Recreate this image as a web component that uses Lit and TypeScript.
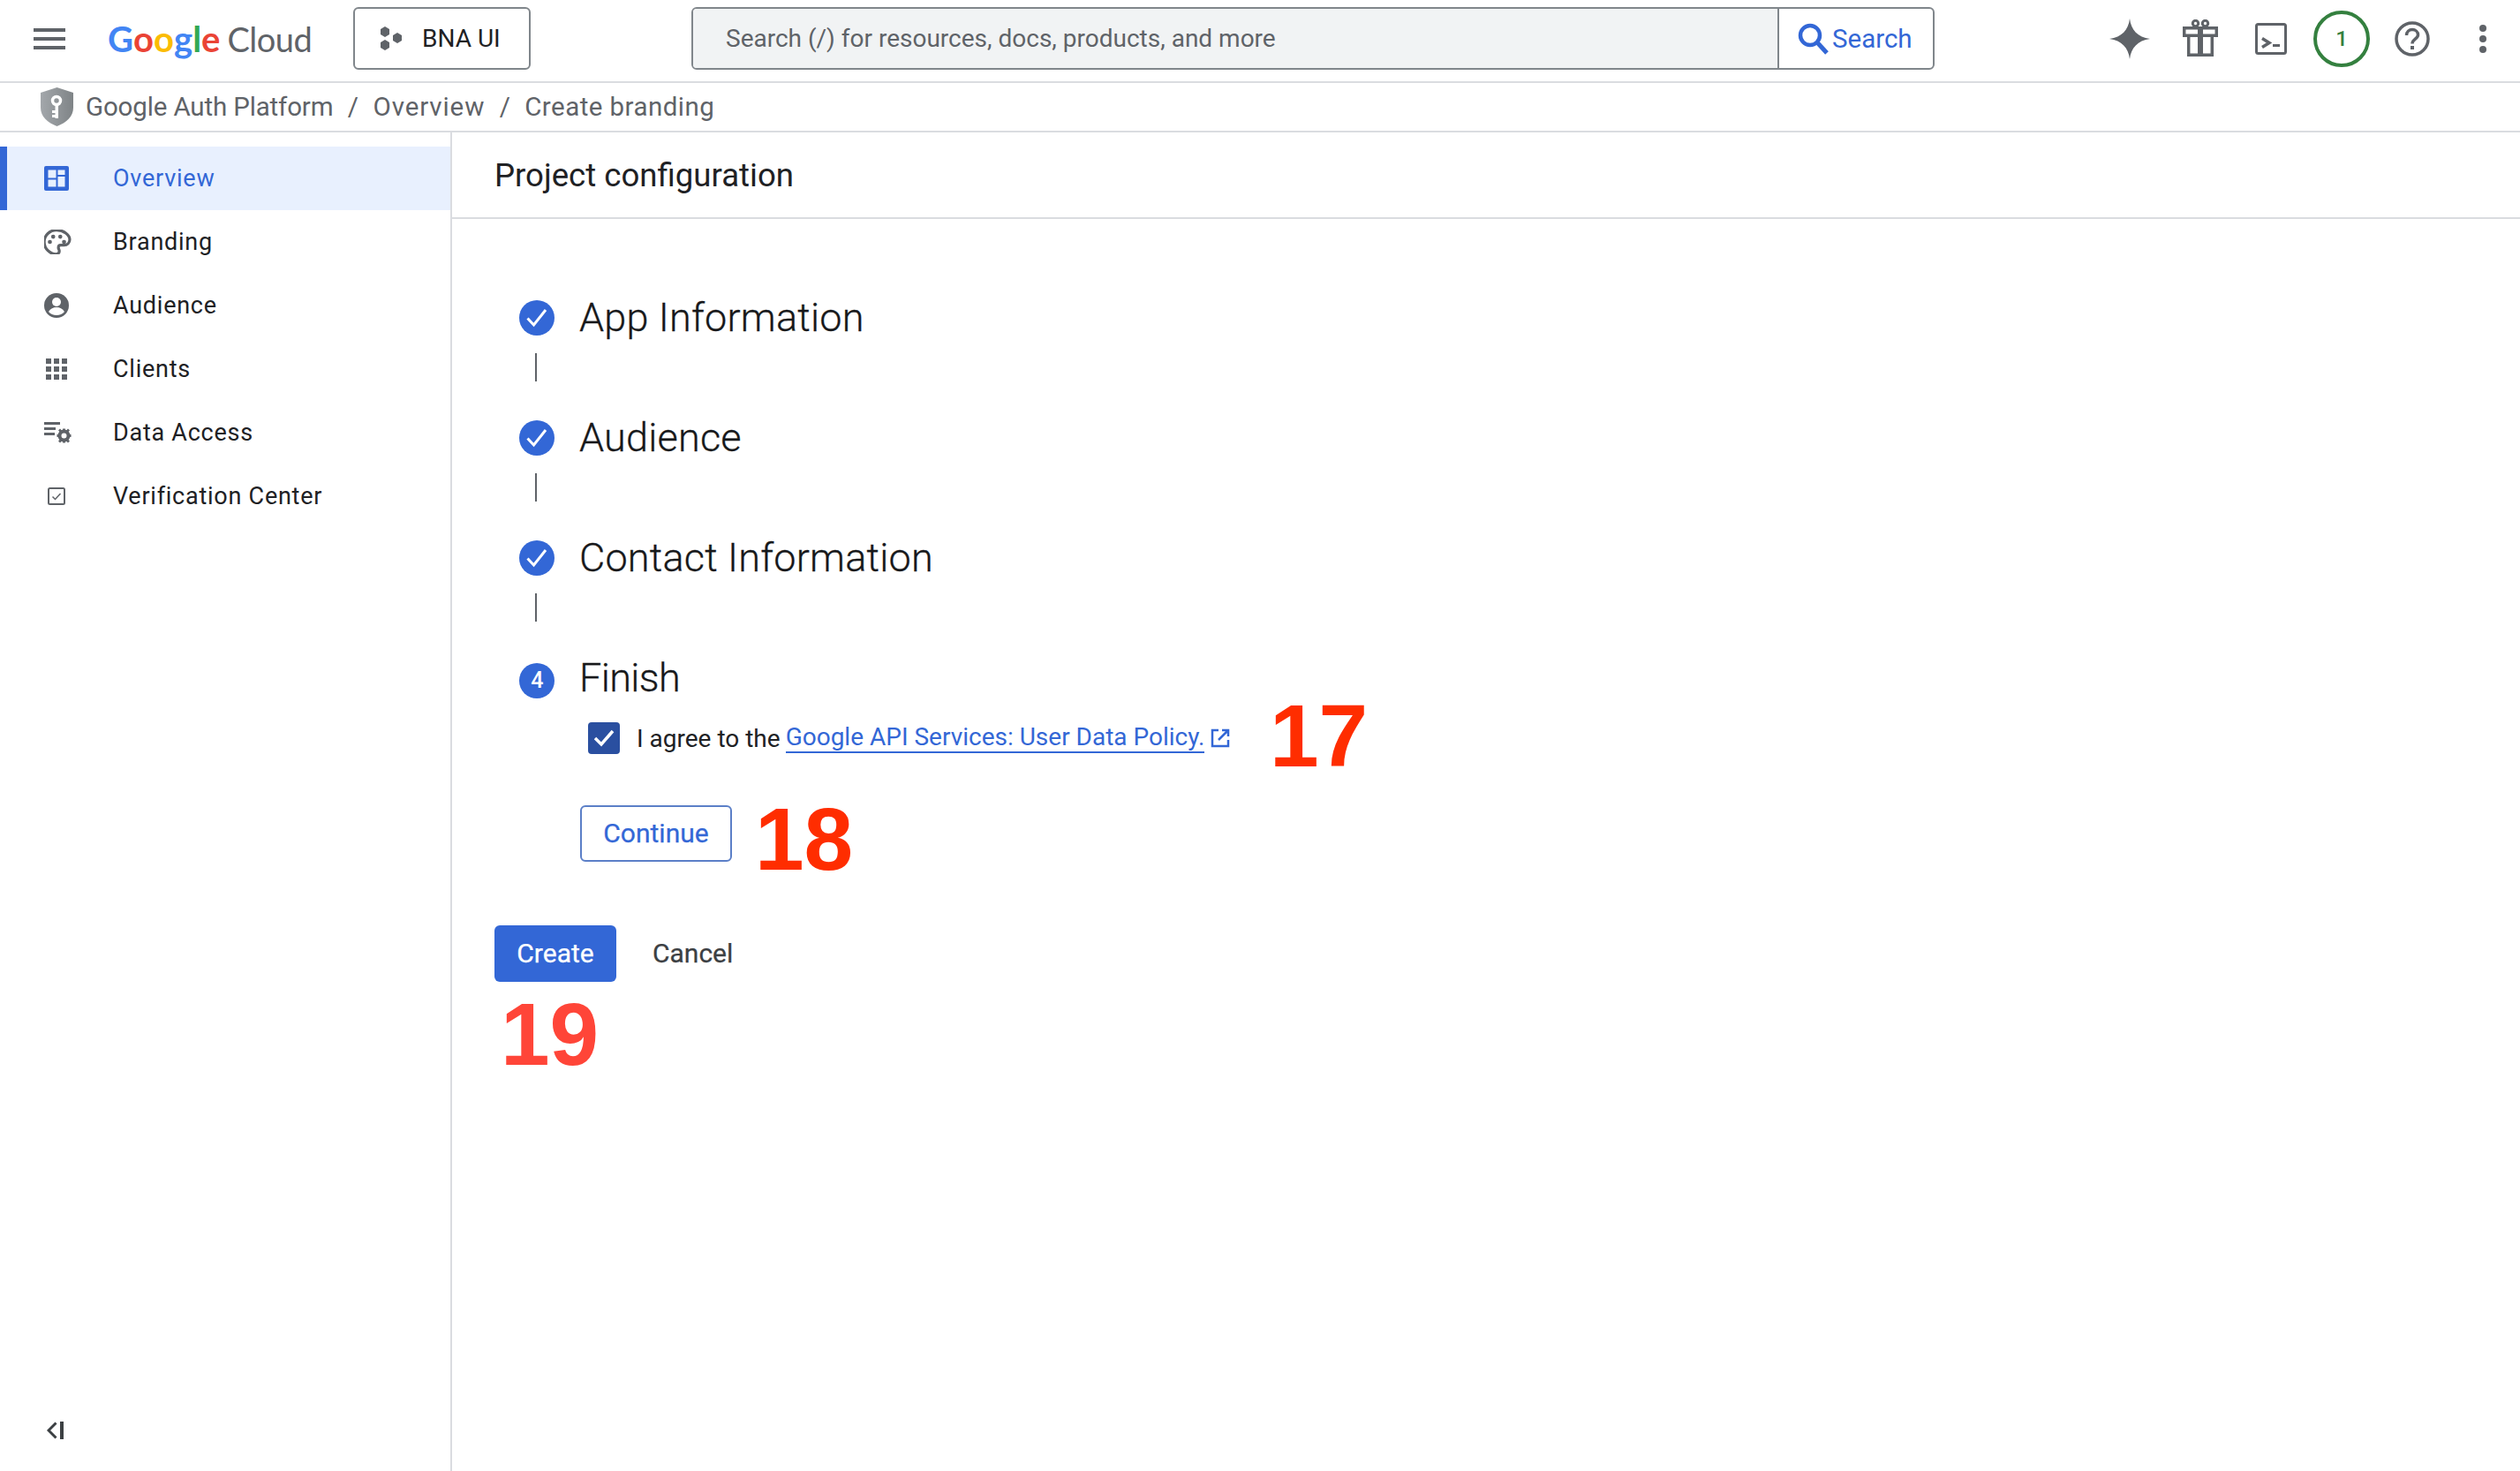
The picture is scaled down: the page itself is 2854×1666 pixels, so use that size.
import { LitElement, html, css, svg } from "lit";
import { customElement } from "lit/decorators.js";

const check = svg`<circle cx="20" cy="20" r="20" fill="#3367d6"/><path d="M7.500 20.500l7 7.500 13.500-17" transform="translate(2 0)" fill="none" stroke="#fff" stroke-width="3"/>`;

const navIcons: Record<string, unknown> = {
  overview: svg`<rect x="0" y="0" width="28" height="28" rx="2" fill="#3367d6"/><path d="M4.500 4.500H13.500v9H4.500zM4.500 15.500H13.500V23.500H4.500zM15.500 4.500h8V10h-8zM15.500 12h8V23.500h-8z" fill="#e8f0fe"/>`,
  branding: svg`<g transform="translate(-1 -1) scale(1.07)"><path d="M14 1.500C7 1.500 1 7 1 14s6 13 12.500 13c2.200 0 3.500-1.500 3.500-3.200 0-1.800-1-2.300-1-3.800 0-1.400 1-2.500 2.500-2.500h3.500c3.400 0 6-2.500 6-6C28 6.500 21.500 1.500 14 1.500z" fill="none" stroke="#5f6368" stroke-width="3"/><circle cx="7" cy="14" r="2.200" fill="#5f6368"/><circle cx="10.500" cy="8.500" r="2.200" fill="#5f6368"/><circle cx="18" cy="8.500" r="2.200" fill="#5f6368"/><circle cx="22" cy="14" r="2.200" fill="#5f6368"/></g>`,
  audience: svg`<circle cx="14" cy="14" r="14" fill="#5f6368"/><circle cx="14" cy="10" r="5" fill="#fff"/><path d="M5 21c2-3.500 5.500-5 9-5s7 1.500 9 5c-2 2.500-5.500 4-9 4s-7-1.500-9-4z" fill="#fff"/>`,
  clients: svg`<path d="M2 2h6v6H2zM11 2h6v6h-6zM20 2h6v6h-6zM2 11h6v6H2zM11 11h6v6h-6zM20 11h6v6h-6zM2 20h6v6H2zM11 20h6v6h-6zM20 20h6v6h-6z" fill="#5f6368"/>`,
  data: svg`<g transform="translate(0 2)"><path d="M0 0h18v3H0zM0 6h13v3H0zM0 12h12v3H0z" fill="#5f6368"/><circle cx="22.500" cy="15.500" r="5" fill="none" stroke="#5f6368" stroke-width="4"/><path d="M21 7.500h3v3h-3zM21 20.500h3v3h-3zM14.500 14h3v3h-3zM27.500 14h3v3h-3zM16 9.500l2-2 2.500 2.500-2 2zM29 21.500l-2 2-2.500-2.500 2-2zM16 21.500l2 2 2.500-2.500-2-2zM29 9.500l-2-2-2.500 2.500 2 2z" fill="#5f6368"/></g>`,
  verify: svg`<rect x="5" y="5" width="18" height="18" rx="1.500" fill="none" stroke="#5f6368" stroke-width="2"/><path d="M9.500 14.500l3 3 6-6.500" fill="none" stroke="#5f6368" stroke-width="1.500"/>`,
};

@customElement("app-root")
export class AppRoot extends LitElement {
  static styles = css`
    :host { display: block; width: 2854px; height: 1666px; position: relative; background: #fff; overflow: hidden; font-family: Roboto, "Liberation Sans", sans-serif; color: #202124; }
    svg { display: block; flex: none; }
    .top { height: 92px; padding-bottom: 5px; box-sizing: border-box; display: flex; align-items: center; }
    .rule { height: 2px; background: #dadce0; }
    .menu { margin-left: 38px; }
    .logo { margin-left: 48px; width: 231px; display: flex; align-items: baseline; font-family: Lato, sans-serif; font-size: 40px; line-height: 50px; font-weight: 700; }
    .logo b { font-weight: 700; }
    .logo .cloud { color: #5f6368; margin-left: 8px; font-weight: 400; font-size: 38px; letter-spacing: -0.500px; }
    .project { margin-left: 47px; width: 201px; height: 71px; box-sizing: border-box; border: 2px solid #80868b; border-radius: 6px; display: flex; align-items: center; padding-left: 28px; gap: 20px; font-size: 28px; }
    .search { margin-left: 182px; width: 1408px; height: 71px; box-sizing: border-box; border: 2px solid #80868b; border-radius: 6px; display: flex; overflow: hidden; }
    .field { flex: 1; background: #f1f3f4; color: #5f6368; display: flex; align-items: center; padding-left: 37px; font-size: 28px; }
    .sbtn { width: 176px; border-left: 2px solid #80868b; display: flex; align-items: center; padding-left: 21px; gap: 3px; box-sizing: border-box; color: #3367d6; font-size: 29.500px; font-weight: 400; }
    .tools { margin-left: 198px; display: flex; align-items: center; }
    .badge { width: 64px; height: 64px; box-sizing: border-box; border: 4px solid #34803f; border-radius: 50%; color: #34803f; display: flex; align-items: center; justify-content: center; font-size: 24px; font-weight: 500; }
    .crumbs { height: 54px; border-bottom: 2px solid #dadce0; display: flex; align-items: center; padding-left: 46px; color: #5f6368; font-size: 29.500px; }
    .crumbs .s { width: 45px; text-align: center; }
    .crumbs .t { margin-left: 14px; letter-spacing: -0.150px; }
    .crumbs .u { letter-spacing: 0.900px; }
    .crumbs .v { letter-spacing: 0.450px; }
    .body { display: flex; height: 1518px; }
    .side { width: 512px; box-sizing: border-box; border-right: 2px solid #dadce0; padding-top: 16px; display: flex; flex-direction: column; }
    .item { height: 72px; display: flex; align-items: center; padding-left: 50px; font-size: 27px; letter-spacing: 0.750px; color: #202124; }
    .item .ic { width: 32px; display: flex; margin-right: 46px; }
    .item.on { background: #e8f0fe; color: #3367d6; box-shadow: inset 8px 0 0 #3367d6; }
    .collapse { margin-top: auto; margin-left: 53px; margin-bottom: 38px; }
    .main { flex: 1; min-width: 0; }
    .head { height: 96px; border-bottom: 2px solid #dadce0; display: flex; align-items: center; padding-left: 48px; font-size: 36.600px; }
    .content { padding: 92px 0 0 48px; }
    .step { display: flex; align-items: center; gap: 28px; height: 40px; padding-left: 28px; font-size: 45px; font-weight: 300; line-height: 40px; letter-spacing: 0.200px; color: #17181a; -webkit-text-stroke: 0.300px #17181a; }
    .line { width: 2px; height: 32px; background: #5f6368; margin: 20px 0 44px 46px; }
    .num { width: 40px; height: 40px; border-radius: 50%; background: #3367d6; color: #fff; -webkit-text-stroke: 0; display: flex; align-items: center; justify-content: center; font-size: 25px; font-weight: 500; transform: translateY(3px); }
    .finish { letter-spacing: -0.600px; }
    .agree { display: flex; align-items: center; margin: 30px 0 0 106px; height: 36px; font-size: 28px; }
    .box { width: 36px; height: 36px; border-radius: 4px; background: #2a4fa0; margin-right: 19px; }
    a { color: #3367d6; text-decoration: none; border-bottom: 2px solid #3367d6; margin-left: 6px; line-height: 32px; }
    .ext { margin-left: 7px; }
    .cont { margin: 58px 0 0 97px; width: 172px; height: 64px; padding-bottom: 2px; box-sizing: border-box; border: 2px solid #5b7fc7; border-radius: 6px; color: #3367d6; display: flex; align-items: center; justify-content: center; font-size: 30px; -webkit-text-stroke: 0.250px #3367d6; }
    .actions { display: flex; align-items: center; margin-top: 72px; }
    .create { width: 138px; height: 64px; padding-bottom: 2px; box-sizing: border-box; border-radius: 6px; background: #3367d6; color: #fff; display: flex; align-items: center; justify-content: center; font-size: 30px; -webkit-text-stroke: 0.250px #fff; }
    .cancel { margin-left: 41px; padding-bottom: 2px; font-size: 30px; color: #3c4043; -webkit-text-stroke: 0.250px #3c4043; }
    .note { position: absolute; font-family: "Liberation Sans", Arial, sans-serif; font-weight: 700; font-size: 100px; line-height: 100px; color: #ff2d00; }
    .n17 { left: 1438px; top: 783px; }
    .n18 { left: 855px; top: 900px; }
    .n19 { left: 567px; top: 1121px; color: #ff4538; }
  `;

  render() {
    const nav: [string, string][] = [["overview","Overview"],["branding","Branding"],["audience","Audience"],["clients","Clients"],["data","Data Access"],["verify","Verification Center"]];
    return html`
      <div class="top">
        <svg class="menu" width="36" height="24" viewBox="0 0 36 24"><path d="M0 0h36v4H0zM0 10h36v4H0zM0 20h36v4H0z" fill="#5f6368"/></svg>
        <div class="logo"><b style="color:#4285f4">G</b><b style="color:#ea4335">o</b><b style="color:#fbbc04">o</b><b style="color:#4285f4">g</b><b style="color:#34a853">l</b><b style="color:#ea4335">e</b><span class="cloud">Cloud</span></div>
        <div class="project">
          <svg width="28" height="28" viewBox="0 0 28 28"><path d="M6 0l5 3v6l-5 3-5-3V3zM20 7l5 3v6l-5 3-5-3v-6zM6 15l5 3v6l-5 3-5-3v-6z" fill="#5f6368"/></svg>
          <span>BNA UI</span>
        </div>
        <div class="search">
          <div class="field">Search (/) for resources, docs, products, and more</div>
          <div class="sbtn">
            <svg width="36" height="36" viewBox="0 0 36 36"><circle cx="14" cy="14" r="11" fill="none" stroke="#3367d6" stroke-width="4.500"/><path d="M22 22l11 12" stroke="#3367d6" stroke-width="5"/></svg>
            <span>Search</span>
          </div>
        </div>
        <div class="tools">
          <svg width="46" height="46" viewBox="0 0 46 46"><path d="M23 0c1.500 13 9 21 23 23-14 2-21.500 10-23 23-1.500-13-9-21-23-23 14-2 21.500-10 23-23z" fill="#5f6368"/></svg>
          <svg style="margin-left:37px" width="40" height="44" viewBox="0 0 40 44"><path d="M1.700 9.700h36.600v8.600H1.700zM6.700 18.300h26.600V40.300H6.700z" fill="none" stroke="#5f6368" stroke-width="3.500"/><path d="M17 9h6v33h-6z" fill="#5f6368"/><circle cx="14.500" cy="4.500" r="3.200" fill="none" stroke="#5f6368" stroke-width="3"/><circle cx="25.500" cy="4.500" r="3.200" fill="none" stroke="#5f6368" stroke-width="3"/></svg>
          <svg style="margin-left:42px" width="36" height="36" viewBox="0 0 36 36"><rect x="1.500" y="1.500" width="33" height="33" rx="2" fill="none" stroke="#5f6368" stroke-width="3"/><path d="M8 17.500l8 5-8 5" fill="none" stroke="#5f6368" stroke-width="3.500"/><path d="M20 24h8v3h-8z" fill="#5f6368"/></svg>
          <div class="badge" style="margin-left:30px">1</div>
          <svg style="margin-left:28px" width="40" height="40" viewBox="0 0 40 40"><circle cx="20" cy="20" r="18" fill="none" stroke="#5f6368" stroke-width="3.500"/><path d="M13.500 16c0-4 3-6.500 6.500-6.500s6.500 2.500 6.500 6c0 4.500-6.500 5-6.500 10" fill="none" stroke="#5f6368" stroke-width="3.500"/><rect x="18" y="28" width="4" height="4" fill="#5f6368"/></svg>
          <svg style="margin-left:56px" width="8" height="32" viewBox="0 0 8 32"><circle cx="4" cy="4" r="4" fill="#5f6368"/><circle cx="4" cy="16" r="4" fill="#5f6368"/><circle cx="4" cy="28" r="4" fill="#5f6368"/></svg>
        </div>
      </div>
      <div class="rule"></div>
      <div class="crumbs">
        <svg width="37" height="44" viewBox="0 0 37 44"><defs><linearGradient id="sh" x1="0" x2="1"><stop offset="0" stop-color="#a3a7ab"/><stop offset="1" stop-color="#7f8487"/></linearGradient></defs><path d="M18.500 0L37 6v17c0 10-8 17-18.500 21C8 40 0 33 0 23V6z" fill="url(#sh)"/><circle cx="18" cy="15" r="4.500" fill="none" stroke="#fff" stroke-width="3.500"/><path d="M16.500 19h3.500v16h-3.500zM13 26h4v3h-4zM13 31h4v3h-4z" fill="#fff"/></svg>
        <span class="t">Google Auth Platform</span><span class="s">/</span><span class="u">Overview</span><span class="s">/</span><span class="v">Create branding</span>
      </div>
      <div class="body">
        <div class="side">
          ${nav.map(([k, t], i) => html`<div class="item ${i === 0 ? "on" : ""}"><span class="ic"><svg width="32" height="28" viewBox="0 0 32 28">${navIcons[k]}</svg></span>${t}</div>`)}
          <svg class="collapse" width="20" height="20" viewBox="0 0 20 20"><path d="M10.500 1.500L2 10l8.500 8.500" fill="none" stroke="#3c4043" stroke-width="3"/><path d="M15 0h4v20h-4z" fill="#3c4043"/></svg>
        </div>
        <div class="main">
          <div class="head">Project configuration</div>
          <div class="content">
            <div class="step"><svg width="40" height="40" viewBox="0 0 40 40">${check}</svg>App Information</div>
            <div class="line"></div>
            <div class="step"><svg width="40" height="40" viewBox="0 0 40 40">${check}</svg>Audience</div>
            <div class="line"></div>
            <div class="step"><svg width="40" height="40" viewBox="0 0 40 40">${check}</svg>Contact Information</div>
            <div class="line"></div>
            <div class="step finish"><span class="num">4</span>Finish</div>
            <div class="agree">
              <div class="box"><svg width="36" height="36" viewBox="0 0 36 36"><path d="M8 18l7 7 13-15" fill="none" stroke="#fff" stroke-width="3.500"/></svg></div>
              <span>I agree to the</span><a>Google API Services: User Data Policy.</a>
              <svg class="ext" width="22" height="22" viewBox="0 0 22 22"><path d="M9 2H2v18h18v-7M13 2h7v7M20 2L9 13" fill="none" stroke="#3367d6" stroke-width="2.500"/></svg>
            </div>
            <div class="cont">Continue</div>
            <div class="actions"><div class="create">Create</div><div class="cancel">Cancel</div></div>
          </div>
        </div>
      </div>
      <div class="note n17">17</div>
      <div class="note n18">18</div>
      <div class="note n19">19</div>
    `;
  }
}
